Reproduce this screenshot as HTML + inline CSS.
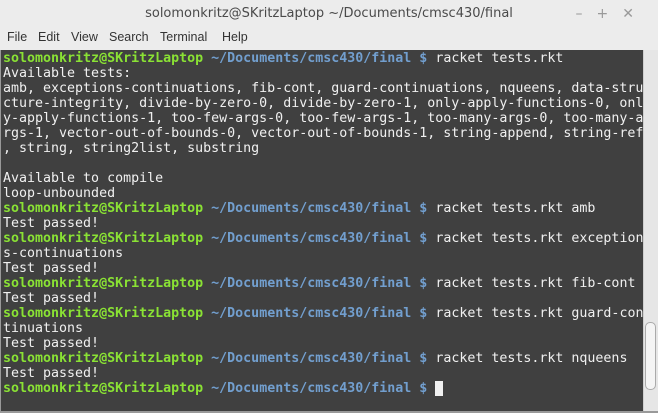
<!DOCTYPE html><html><head><meta charset="utf-8"><style>
body{margin:0;width:658px;height:413px;overflow:hidden;background:#3f3f3f;font-family:"Liberation Sans",sans-serif}
#title{position:absolute;left:0;top:0;width:658px;height:27px;background:#ececec;text-align:center;line-height:28px;font-size:13px;color:#4a4a4a;font-family:"DejaVu Sans",sans-serif}
#ctl{position:absolute;right:10px;top:0;line-height:28px;color:#999;font-size:14px;letter-spacing:14px}
#menu{position:absolute;left:0;top:27px;width:658px;height:23px;background:#ececec;font-size:12.5px;color:#333;font-family:"Liberation Sans",sans-serif;line-height:20px}
#menu span{position:absolute;top:0}
#term{position:absolute;left:1px;top:50px;width:642px;height:362px;background:#404040;font-family:"DejaVu Sans Mono",monospace;font-size:13.3px;line-height:15px;color:#f0f0f0;white-space:pre;overflow:hidden;padding-left:2px;padding-top:1px}
.g{color:#8ae234;font-weight:bold}.b{color:#729fcf;font-weight:bold}
#sb{position:absolute;left:643px;top:50px;width:14px;height:363px;background:#e6e6e6;border-left:1px solid #cfcfcf}
#th{position:absolute;left:645px;top:322px;width:9px;height:66px;background:#f4f4f4;border:1px solid #aaa;border-radius:5px}
#bl{position:absolute;left:0;top:50px;width:1px;height:363px;background:#999}
#bb{position:absolute;left:0;top:411px;width:658px;height:2px;background:#999}
</style></head><body>
<div id="title">solomonkritz@SKritzLaptop ~/Documents/cmsc430/final<div id="ctl">–+✕</div></div>
<div id="menu"><span style="left:7px">File</span><span style="left:38px">Edit</span><span style="left:71px">View</span><span style="left:109px">Search</span><span style="left:160px">Terminal</span><span style="left:222px">Help</span></div>
<div id="term"><span class="g">solomonkritz@SKritzLaptop</span> <span class="b">~/Documents/cmsc430/final $</span> racket tests.rkt
Available tests:
amb, exceptions-continuations, fib-cont, guard-continuations, nqueens, data-stru
cture-integrity, divide-by-zero-0, divide-by-zero-1, only-apply-functions-0, onl
y-apply-functions-1, too-few-args-0, too-few-args-1, too-many-args-0, too-many-a
rgs-1, vector-out-of-bounds-0, vector-out-of-bounds-1, string-append, string-ref
, string, string2list, substring

Available to compile
loop-unbounded
<span class="g">solomonkritz@SKritzLaptop</span> <span class="b">~/Documents/cmsc430/final $</span> racket tests.rkt amb
Test passed!
<span class="g">solomonkritz@SKritzLaptop</span> <span class="b">~/Documents/cmsc430/final $</span> racket tests.rkt exception
s-continuations
Test passed!
<span class="g">solomonkritz@SKritzLaptop</span> <span class="b">~/Documents/cmsc430/final $</span> racket tests.rkt fib-cont
Test passed!
<span class="g">solomonkritz@SKritzLaptop</span> <span class="b">~/Documents/cmsc430/final $</span> racket tests.rkt guard-con
tinuations
Test passed!
<span class="g">solomonkritz@SKritzLaptop</span> <span class="b">~/Documents/cmsc430/final $</span> racket tests.rkt nqueens
Test passed!
<span class="g">solomonkritz@SKritzLaptop</span> <span class="b">~/Documents/cmsc430/final $</span> <span style="background:#f0f0f0"> </span></div>
<div id="sb"></div><div id="th"></div><div id="bl"></div><div id="bb"></div>
</body></html>
